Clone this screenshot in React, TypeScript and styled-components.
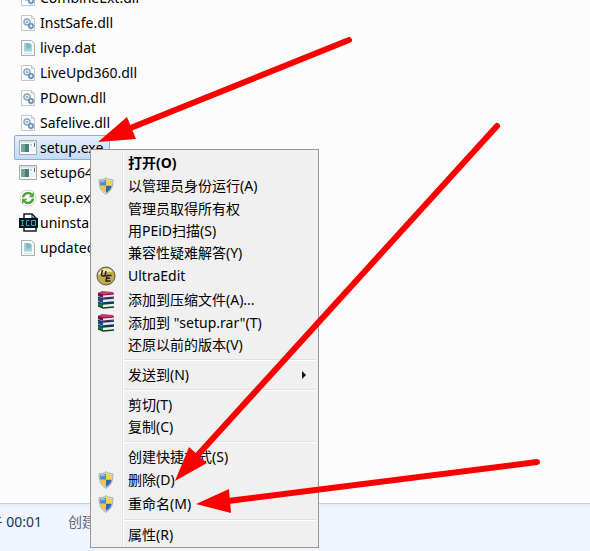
import React from "react";
import styled, { createGlobalStyle, css } from "styled-components";

const latin = `"Noto Sans", "Noto Sans CJK SC", sans-serif`;

const GlobalStyle = createGlobalStyle`
  *, *::before, *::after { box-sizing: border-box; }
  html, body { margin: 0; background: #fcfcfc; overflow: hidden; }
  body { font-family: ${latin}; font-size: 14px; color: #000; }
`;

const Window = styled.div`
  position: relative;
  display: flex;
  flex-direction: column;
  height: 100vh;
  overflow: hidden;
`;

const Files = styled.main`
  flex: 1;
  min-height: 0;
  overflow: hidden;
`;

const FileList = styled.ul`
  list-style: none;
  margin: -15px 0 0;
  padding: 0 0 0 14px;
`;

const FileItem = styled.li`
  display: flex;
  height: 25px;
`;

const FileButton = styled.button<{ $selected?: boolean }>`
  display: flex;
  align-items: center;
  gap: 2px;
  height: 25px;
  padding: 0 6px 0 4px;
  border: 1px solid transparent;
  border-radius: 2px;
  background: transparent;
  color: #000;
  font: inherit;
  white-space: nowrap;
  ${(p) =>
    p.$selected &&
    css`
      border-color: #84acdd;
      background: linear-gradient(#e3eefc, #c4dbf8);
    `}
`;

const Details = styled.footer`
  display: flex;
  gap: 26px;
  flex: none;
  height: 48px;
  padding-top: 7px;
  border-top: 1px solid #c2d0de;
  background: linear-gradient(#e6eef8, #f0f4fc 4px);
  line-height: 22px;
  white-space: nowrap;
`;

const DetailValue = styled.span`
  display: flex;
  justify-content: flex-end;
  width: 42px;
  overflow: hidden;
  color: #1e3250;
`;

const DetailLabel = styled.span`
  color: #5a6779;
`;

const Menu = styled.div`
  position: absolute;
  top: 149px;
  left: 90px;
  width: 229px;
  padding: 2px 2px 1px;
  border: 1px solid #979797;
  background: linear-gradient(90deg, #f1f1f1 32px, #e2e3e3 32px, #e2e3e3 33px, #fff 33px, #fff 34px, #f0f0f0 34px);
  background-origin: border-box;
`;

const MenuItem = styled.button<{ $tall?: boolean; $bold?: boolean }>`
  display: grid;
  grid-template-columns: 25px 1fr 14px;
  column-gap: 10px;
  align-items: center;
  width: 100%;
  height: ${(p) => (p.$tall ? 24 : 22)}px;
  padding: 0;
  border: 0;
  background: transparent;
  color: #000;
  font: inherit;
  font-weight: ${(p) => (p.$bold ? 700 : 400)};
  line-height: 20px;
  text-align: left;
  white-space: nowrap;
`;

const MenuIcon = styled.span`
  display: flex;
  justify-content: center;
`;

const Separator = styled.hr`
  height: 2px;
  margin: 3px 0 3px 31px;
  border: 0;
  border-top: 1px solid #e0e0e0;
  background: #fff;
`;

const Annotations = styled.svg`
  position: absolute;
  top: 0;
  left: 0;
  pointer-events: none;
`;

const DllIcon = () => (
  <svg width="19" height="18" viewBox="0 0 19 18" aria-hidden="true">
    <path d="M2.5 1.5h10l3 3v12h-13z" fill="#fafcfd" stroke="#c3c8cc" />
    <path d="M12.500 1.500v3h3" fill="none" stroke="#c3c8cc" />
    <circle cx="8" cy="8" r="3" fill="#e6f0f8" stroke="#8fa9c4" strokeWidth="1.500" />
    <circle cx="8" cy="8" r="1" fill="#7896b4" />
    <circle cx="12" cy="12" r="2.200" fill="#dceaf5" stroke="#6288ad" strokeWidth="1.500" />
    <path d="M8 4v1M4 8h1M5.200 5.200l.8.8M12 8.800v1M14.500 12h1M12 14.500v1" stroke="#8fa9c4" />
  </svg>
);

const DatIcon = () => (
  <svg width="19" height="18" viewBox="0 0 19 18" aria-hidden="true">
    <path d="M2.5 1.5h10l3 3v12h-13z" fill="#f5fafb" stroke="#a9b3b6" />
    <path d="M5 4h6l2 2v6H5z" fill="#a5d2d5" />
    <path d="m7 4 5 1v4l-5 1z" fill="#7fbac1" />
    <path d="M5 12.5h8M5 14.5h8" stroke="#d1e1e3" />
  </svg>
);

const ExeIcon = () => (
  <svg width="19" height="18" viewBox="0 0 19 18" aria-hidden="true">
    <path d="M.5 1.500h17v14H.5z" fill="#f8f9f9" stroke="#a7aaad" />
    <path d="M1 2h16v2H1z" fill="#dde2e6" />
    <path d="M2 5h8v8H2z" fill="#47807f" />
    <path d="M2 5h4v8H2z" fill="#73a593" />
    <path d="M11 5h2v2h-2z" fill="#c4ced5" />
    <path d="M15.500 4v4" stroke="#3f7a68" />
    <path d="M11 10h5M11 12h5" stroke="#e6eaec" />
  </svg>
);

const SyncIcon = () => (
  <svg width="19" height="18" viewBox="0 0 19 18" aria-hidden="true">
    <circle cx="9" cy="9" r="8" fill="#fff" stroke="#d3dad0" />
    <path d="M4 8.500a5 5 0 0 1 8.500-3M14 9.500a5 5 0 0 1-8.500 3" fill="none" stroke="#4da136" strokeWidth="2.400" />
    <path d="M14.800 3v5.200H9.600zM3.200 15V9.800h5.200z" fill="#4da136" />
  </svg>
);

const IcoIcon = () => (
  <svg width="19" height="20" viewBox="0 0 19 20" aria-hidden="true">
    <path d="M5 1h8l4 4v13H5z" fill="#fff" stroke="#111d2c" strokeWidth="1.500" />
    <path d="M13 1v4h4" fill="none" stroke="#111d2c" />
    <path d="M0 5h19v10H0z" fill="#061420" />
    <path d="M2 7.500h3M3.500 7.500v5M2 12.500h3M10.500 7.500h-3v5h3M12.500 7.500h4v5h-4z" fill="none" stroke="#18b0b5" />
  </svg>
);

const ShieldIcon = () => (
  <svg width="16" height="18" viewBox="0 0 16 18" aria-hidden="true">
    <path d="M8 .7c2 1.500 4.200 2 6.900 2.100.2 6.400-1.200 11.500-6.900 14.500C2.300 14.300.9 9.200 1.100 2.800 3.800 2.700 6 2.200 8 .7z" fill="#dcdfde" stroke="#98a2a4" strokeWidth=".8" />
    <path d="M8 2.200v6.500H2.300c-.2-1.500-.3-3-.2-4.700C4.300 3.800 6.200 3.400 8 2.200z" fill="#4b8bc9" />
    <path d="M8 2.200c1.800 1.200 3.700 1.600 5.900 1.800.1 1.700 0 3.200-.2 4.700H8z" fill="#f6d34c" />
    <path d="M2.300 8.700H8V16c-3.200-1.800-5-4.200-5.700-7.300z" fill="#f0c93f" />
    <path d="M8 8.700h5.700C13 11.800 11.200 14.200 8 16z" fill="#2d69ac" />
    <path d="M3 5c1.800-.2 3-.5 4-1" fill="none" stroke="#b4d6f0" />
  </svg>
);

const UltraEditIcon = () => (
  <svg width="20" height="20" viewBox="0 0 20 20" aria-hidden="true">
    <circle cx="10" cy="10" r="9" fill="#c2aa4b" stroke="#5a5440" />
    <path d="M2 9C3 2 13 0 17 6c-4-1-9 0-15 3z" fill="#ece4b4" />
    <path d="M6.500 4 5.500 8.500q0 1.500 1.500 1.500h2l1-5" fill="none" stroke="#28251a" strokeWidth="1.500" />
    <path d="M15.500 9.500H11l-1 5.500h4.500M10.500 12.200H14" fill="none" stroke="#28251a" strokeWidth="1.500" />
  </svg>
);

const RarIcon = () => (
  <svg width="18" height="18" viewBox="0 0 18 18" aria-hidden="true">
    <path d="M1 2 5 0l11 1 1 2-11 1z" fill="#c43a72" />
    <path d="m1 2 5 2v3L1 5z" fill="#7d0f3a" />
    <path d="m6 4 11-1v3L6 7z" fill="#f4e3ea" />
    <path d="m1 7 5 1h11v3l-11 1-5-2z" fill="#e3edf4" />
    <path d="m1 6 5 2v4l-5-2z" fill="#174b98" />
    <path d="m1 11 5 2v4l-5-2z" fill="#157448" />
    <path d="m6 13 11-1v4L6 17z" fill="#edf2e5" />
    <path d="m1 2 5 2 11-1M6 7l11-1" fill="none" stroke="#6d1238" />
    <path d="m1 6 5 2 11-1M6 12l11-1" fill="none" stroke="#12366f" strokeWidth="1.300" />
    <path d="m1 11 5 2 11-1M1 15l5 2 11-1" fill="none" stroke="#0c4229" strokeWidth="1.300" />
  </svg>
);

const SubmenuArrow = () => (
  <svg width="6" height="8" viewBox="0 0 6 8" aria-hidden="true">
    <path d="M0 0v8l4-4z" fill="#111" />
  </svg>
);

const files = [
  { name: "CombineExt.dll", Icon: DllIcon },
  { name: "InstSafe.dll", Icon: DllIcon },
  { name: "livep.dat", Icon: DatIcon },
  { name: "LiveUpd360.dll", Icon: DllIcon },
  { name: "PDown.dll", Icon: DllIcon },
  { name: "Safelive.dll", Icon: DllIcon },
  { name: "setup.exe", Icon: ExeIcon, selected: true },
  { name: "setup64.exe", Icon: ExeIcon },
  { name: "seup.exe", Icon: SyncIcon },
  { name: "uninstall.exe", Icon: IcoIcon },
  { name: "updatecfg.dat", Icon: DatIcon },
];

type Entry = {
  label: string;
  Icon?: () => React.ReactElement;
  tall?: boolean;
  bold?: boolean;
  submenu?: boolean;
};

const groups: Entry[][] = [
  [
    { label: "打开(O)", bold: true },
    { label: "以管理员身份运行(A)", Icon: ShieldIcon, tall: true },
    { label: "管理员取得所有权" },
    { label: "用PEiD扫描(S)" },
    { label: "兼容性疑难解答(Y)" },
    { label: "UltraEdit", Icon: UltraEditIcon, tall: true },
    { label: "添加到压缩文件(A)...", Icon: RarIcon, tall: true },
    { label: '添加到 "setup.rar"(T)', Icon: RarIcon },
    { label: "还原以前的版本(V)" },
  ],
  [{ label: "发送到(N)", submenu: true }],
  [{ label: "剪切(T)" }, { label: "复制(C)" }],
  [
    { label: "创建快捷方式(S)" },
    { label: "删除(D)", Icon: ShieldIcon, tall: true },
    { label: "重命名(M)", Icon: ShieldIcon, tall: true },
  ],
  [{ label: "属性(R)" }],
];

export default function App() {
  return (
    <>
      <GlobalStyle />
      <Window>
        <Files>
          <FileList>
            {files.map(({ name, Icon, selected }) => (
              <FileItem key={name}>
                <FileButton type="button" $selected={selected}>
                  <Icon />
                  {name}
                </FileButton>
              </FileItem>
            ))}
          </FileList>
        </Files>
        <Details>
          <DetailValue>
            <span>下午 00:01</span>
          </DetailValue>
          <DetailLabel>创建日期:</DetailLabel>
        </Details>
        <Menu role="menu">
          {groups.map((group, i) => (
            <React.Fragment key={group[0].label}>
              {i > 0 && <Separator />}
              {group.map(({ label, Icon, tall, bold, submenu }) => (
                <MenuItem key={label} type="button" role="menuitem" $tall={tall} $bold={bold}>
                  <MenuIcon>{Icon && <Icon />}</MenuIcon>
                  <span>{label}</span>
                  {submenu && <SubmenuArrow />}
                </MenuItem>
              ))}
            </React.Fragment>
          ))}
        </Menu>
        <Annotations width="590" height="551" viewBox="0 0 590 551" aria-hidden="true">
          <g stroke="#fb0000" strokeWidth="6" strokeLinecap="round">
            <path d="M349 40 128 129M497 126 196 457M537 462 228 501" />
          </g>
          <path d="m98 142 29-25 9 22zM175 481l14-34 18 16zM196 504l33-15 2 24z" fill="#fb0000" />
        </Annotations>
      </Window>
    </>
  );
}
